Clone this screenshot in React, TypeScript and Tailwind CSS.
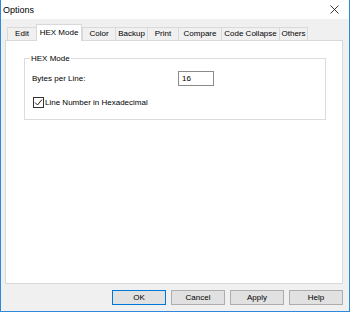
import React from "react";

const tabs: { label: string; w: string; active?: boolean }[] = [
  { label: "Edit", w: "w-[29px]" },
  { label: "HEX Mode", w: "w-[46px]", active: true },
  { label: "Color", w: "w-[33px]" },
  { label: "Backup", w: "w-[32px]" },
  { label: "Print", w: "w-[31px]" },
  { label: "Compare", w: "w-[43px]" },
  { label: "Code Collapse", w: "w-[58px]" },
  { label: "Others", w: "w-[29px]" },
];

function Btn({ label, primary }: { label: string; primary?: boolean }) {
  return (
    <div
      className={
        "w-[54px] h-[15px] flex items-center justify-center bg-[#e1e1e1] border " +
        (primary ? "border-[#0078d7]" : "border-[#adadad]")
      }
    >
      {label}
    </div>
  );
}

export default function App() {
  return (
    <div className="w-[350px] h-[312px] flex flex-col bg-[#f0f0f0] border-x border-b border-[#2f88d8] font-['Liberation_Sans',Arial,sans-serif] text-[8px] leading-[10px] text-black">
      <div className="h-[19px] shrink-0 bg-white flex items-center justify-between pl-[2px] pr-[10px]">
        <span className="text-[9px]">Options</span>
        <svg width="9" height="9" viewBox="0 0 9 9">
          <path d="M0.5 0.5 L8.5 8.5 M8.5 0.5 L0.5 8.5" stroke="#222" strokeWidth="0.9" fill="none" />
        </svg>
      </div>
      <div className="pl-[4px] pt-[5px]">
        <div className="relative z-10 flex items-end h-[16px] pl-[2px]">
          {tabs.map((t) =>
            t.active ? (
              <div
                key={t.label}
                className={t.w + " h-[17px] -mb-px bg-white border-x border-t border-[#d9d9d9] flex justify-center pt-[3px]"}
              >
                {t.label}
              </div>
            ) : (
              <div
                key={t.label}
                className={t.w + " h-[13px] bg-[#f0f0f0] border-l border-t border-[#d9d9d9] last:border-r flex items-center justify-center"}
              >
                {t.label}
              </div>
            )
          )}
        </div>
        <div className="w-[338px] h-[244px] bg-white border border-[#d9d9d9]">
          <div className="ml-[18px] mt-[17px] w-[302px] h-[62px] relative border border-[#dcdcdc]">
            <span className="absolute -top-[5px] left-[5px] bg-white px-[1px]">HEX Mode</span>
            <div className="flex items-center mt-[12px] pl-[7px] h-[15px]">
              <span className="w-[146px]">Bytes per Line:</span>
              <div className="w-[36px] h-[15px] border border-[#8a8a8a] flex items-center pl-[3px]">16</div>
            </div>
            <div className="flex items-center mt-[11px] pl-[8px] h-[11px]">
              <div className="w-[11px] h-[11px] border border-[#333] flex items-center justify-center">
                <svg width="9" height="9" viewBox="0 0 9 9">
                  <path d="M1 4.5 L3.5 7 L8 1.5" stroke="#222" strokeWidth="1" fill="none" />
                </svg>
              </div>
              <span className="ml-[1px]">Line Number in Hexadecimal</span>
            </div>
          </div>
        </div>
      </div>
      <div className="flex justify-end gap-[5px] mt-[6px] pr-[6px]">
        <Btn label="OK" primary />
        <Btn label="Cancel" />
        <Btn label="Apply" />
        <Btn label="Help" />
      </div>
    </div>
  );
}
